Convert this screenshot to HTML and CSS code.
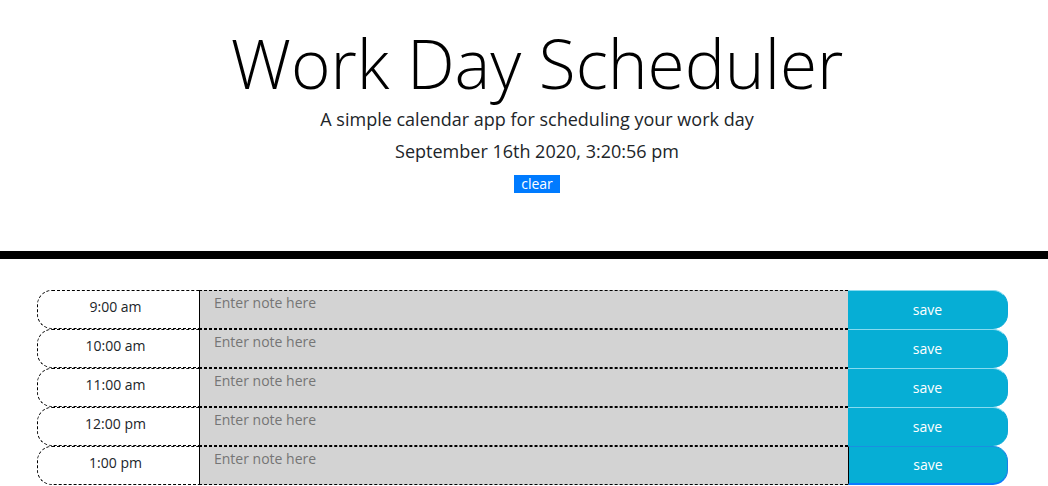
FILE: index.html
```html
<!DOCTYPE html>
<html lang="en">
<head>
<meta charset="utf-8">
<title>Work Day Scheduler</title>
<link rel="stylesheet" href="styles.css">
</head>
<body>
<header class="jumbotron">
  <h1 class="display">Work Day Scheduler</h1>
  <p class="lead">A simple calendar app for scheduling your work day</p>
  <p class="current-day">September 16th 2020, 3:20:56 pm</p>
  <button class="clear-btn">clear</button>
</header>
<main class="container">
  <div class="row">
    <div class="hour">9:00 am</div>
    <textarea class="note" placeholder="Enter note here"></textarea>
    <button class="save-btn">save</button>
  </div>
  <div class="row">
    <div class="hour">10:00 am</div>
    <textarea class="note" placeholder="Enter note here"></textarea>
    <button class="save-btn">save</button>
  </div>
  <div class="row">
    <div class="hour">11:00 am</div>
    <textarea class="note" placeholder="Enter note here"></textarea>
    <button class="save-btn">save</button>
  </div>
  <div class="row">
    <div class="hour">12:00 pm</div>
    <textarea class="note" placeholder="Enter note here"></textarea>
    <button class="save-btn">save</button>
  </div>
  <div class="row">
    <div class="hour">1:00 pm</div>
    <textarea class="note" placeholder="Enter note here"></textarea>
    <button class="save-btn save-btn-focus">save</button>
  </div>
</main>
</body>
</html>
```
FILE: styles.css
```css
html, body {
  margin: 0;
  padding: 0;
  background: #fff;
  font-family: "Open Sans", "Liberation Sans", sans-serif;
  color: #212529;
}

.jumbotron {
  display: flex;
  flex-direction: column;
  align-items: center;
  padding: 20px 0 58px 26px;
  border-bottom: 8px solid #000;
}

.display {
  margin: 0;
  font-size: 67.5px;
  font-weight: 350;
  line-height: 86px;
  color: #000;
}

.lead {
  margin: 0;
  font-size: 18px;
  line-height: 27px;
}

.current-day {
  margin: 5px 0 0;
  font-size: 18px;
  line-height: 27px;
}

.clear-btn {
  margin-top: 10px;
  padding: 0 7px;
  height: 18px;
  border: none;
  border-radius: 0;
  background: #007bff;
  color: #fff;
  font-family: "Open Sans", "Liberation Sans", sans-serif;
  font-size: 14px;
  line-height: 18px;
}

.container {
  display: flex;
  flex-direction: column;
  margin: 31px 40px 0 37px;
}

.row {
  display: flex;
  height: 39px;
}

.hour {
  box-sizing: border-box;
  width: 162px;
  flex: none;
  padding: 5px 6px 0 0;
  text-align: center;
  font-size: 14px;
  line-height: 21px;
  color: #212529;
  border-top: 1px dashed #000;
  border-bottom: 1px dashed #000;
  border-left: 1px dashed #000;
  border-radius: 15px 0 0 15px;
}

.note {
  box-sizing: border-box;
  flex: 1;
  height: 39px;
  margin: 0;
  padding: 1px 0 0 14px;
  resize: none;
  background: #d3d3d3;
  border: none;
  border-left: 1px solid #000;
  border-top: 1px dashed #000;
  border-bottom: 1px dashed #000;
  font-family: "Open Sans", "Liberation Sans", sans-serif;
  font-size: 14px;
  line-height: 21px;
  color: #212529;
}

.note::placeholder {
  color: #757575;
}

.save-btn {
  box-sizing: border-box;
  width: 160px;
  flex: none;
  height: 39px;
  margin: 0;
  padding: 0 0 2px;
  background: #06aed5;
  color: #fff;
  font-family: "Open Sans", "Liberation Sans", sans-serif;
  font-size: 14px;
  border: none;
  border-top: 1px solid #86dbf0;
  border-right: 1px solid #0aa6d8;
  border-radius: 0 15px 15px 0;
}

.save-btn-focus {
  border-top: 1px solid #1a8fe0;
  border-left: 1px solid #000;
  border-right: 1px solid #1a7fe8;
  border-bottom: 2px solid #0a7bff;
}
```
